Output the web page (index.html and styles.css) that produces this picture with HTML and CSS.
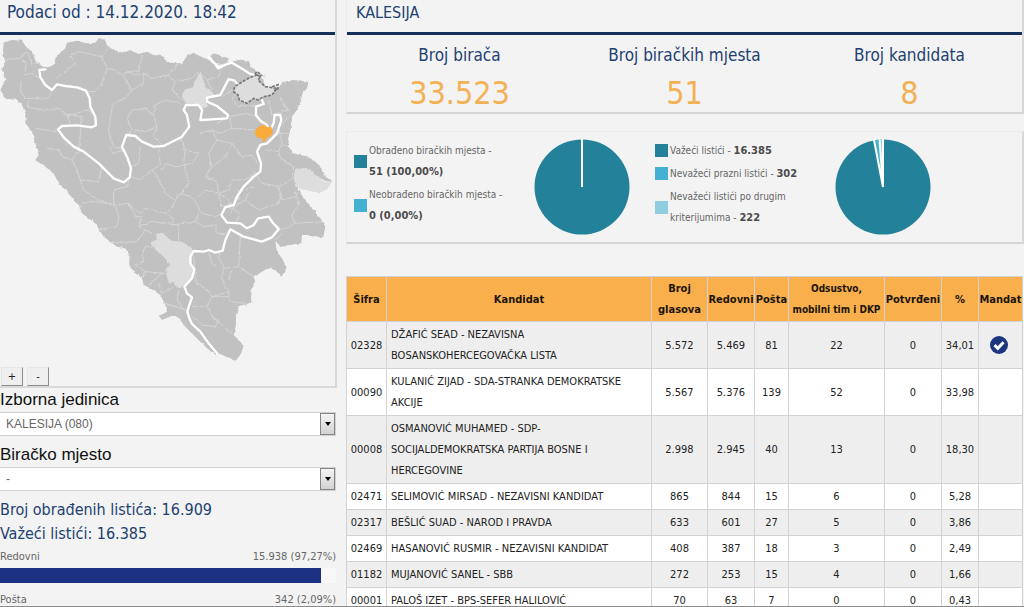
FILE: index.html
```html
<!DOCTYPE html>
<html lang="bs">
<head>
<meta charset="utf-8">
<meta name="viewport" content="width=device-width, initial-scale=1">
<title>Kalesija – rezultati</title>
<link rel="stylesheet" href="styles.css">
</head>
<body>
<div class="page">
  <aside class="side">
    <section class="map-card">
      <h1 class="bar-title">Podaci od : 14.12.2020. 18:42</h1>
      <svg class="map" viewBox="4 105 1005 997" role="img" aria-label="Mapa">
        <defs>
          <filter id="rough" x="-5%" y="-5%" width="110%" height="110%" color-interpolation-filters="sRGB">
            <feTurbulence type="fractalNoise" baseFrequency="0.08" numOctaves="2" seed="4"/>
            <feDisplacementMap in="SourceGraphic" scale="9" xChannelSelector="R" yChannelSelector="G"/>
          </filter>
        </defs>
        <g filter="url(#rough)">
          <path class="land" d="M15 128L40 120 70 122 82 140 100 155 112 185 140 205 165 195 172 170 200 145 205 128 235 122 262 130 290 128 300 114 318 118 325 135 345 150 375 158 395 150 420 162 445 155 465 165 490 168 500 180 515 188 550 190 565 168 585 158 600 168 625 176 648 195 660 205 690 185 705 187 715 178 750 183 758 200 785 225 800 258 838 265 850 250 885 240 930 245 925 265 912 280 905 305 895 330 880 350 878 380 870 410 868 440 890 462 920 468 935 485 930 510 890 515 895 560 905 580 925 605 945 630 965 655 980 680 974 710 960 712 940 705 910 705 908 730 870 735 850 740 830 725 835 755 850 775 865 805 848 830 830 810 815 800 790 815 765 832 770 845 758 870 758 905 745 913 722 918 712 945 712 975 705 1005 720 1020 735 1035 728 1060 712 1082 690 1073 655 1058 650 1065 620 1040 590 1010 560 980 545 960 525 945 490 960 480 948 505 935 500 915 485 885 455 865 435 855 430 835 410 820 392 795 392 765 380 745 355 740 315 710 290 670 250 640 240 615 200 570 175 540 165 520 140 500 110 480 120 465 110 430 100 395 80 370 82 345 70 315 50 295 25 300 5 270 20 240 10 210 20 185 12 160Z"/>
          <path class="land" d="M635 165L650 161 665 167 690 175 685 190 660 194 645 185Z"/>
          <path class="pale" d="M605 213L612 235 620 262 640 275 650 290 620 300 628 318 612 325 590 312 560 310 550 290 555 270 582 262 590 240ZM890 508L925 503 965 525 975 545 1000 545 985 568 960 580 935 572 890 560 885 530ZM470 702L490 698 520 722 550 725 580 745 582 765 575 785 588 810 575 840 560 852 545 865 530 860 525 845 510 850 500 810 515 795 495 770 465 745 455 728 475 718Z"/>
          <path class="land" d="M925 468L950 485 968 502 972 522 1000 545 980 543 950 525 925 500Z"/>
          <path class="edge" d="M20 180L60 175 82 190 78 225 100 220 135 240M60 175L85 155 100 190 125 190M68 245L65 270 80 295 150 295 165 260M90 300L85 320 105 325 150 330 180 325 205 345 215 370M110 385L175 395M205 350L265 330 285 340M172 235L200 215 230 190 215 165 240 155 310 170 330 140M310 170L325 205 350 210 375 230 400 270 380 295 345 310 335 350 330 395 345 440 375 450M325 205L310 250 290 275 260 275M375 230L385 215 420 215 430 165M385 215L410 225 435 220 435 250 400 270M435 220L460 235 510 225 540 190M510 225L530 245 520 270 550 300M530 245L580 235 600 215 625 240 660 230 670 205M625 240L640 270M400 330L385 355 400 390 385 405M400 330L440 325 465 345 470 315 500 300 545 310M465 345L475 380 465 410 490 435M475 380L440 395 410 390M250 350L245 405 240 445M205 345L250 350M140 445L180 450 190 470 220 480 240 450M220 480L235 510 245 540 300 545 310 500M245 540L255 570 300 600 345 615 345 570 385 560 395 530 425 540 460 510 470 520 500 580 530 600M330 440L345 460 375 450M425 440L420 490 395 500M460 510L485 495 480 440M545 410L560 450 600 460 580 490 530 500 500 490 490 510M560 450L555 490 570 550 540 590M600 400L640 390 655 420 700 430 730 470 760 465 775 490M655 420L630 460 640 500 680 470 700 430M640 500L620 530 655 545 660 580 690 570 700 540 740 540 770 515M655 370L690 350 700 385 665 400 640 390M690 350L740 340 775 350M700 385L770 390M670 290L700 270M710 280L700 300 720 320 770 315M810 300L820 345 870 330 850 305M845 290L855 315 870 330M870 350L840 385 850 430 870 440M850 430L840 455 800 450M840 455L850 480 885 500 880 540 840 560 790 550 770 520M840 560L850 600 890 590 900 575M250 610L290 605 350 615 360 655 355 680 300 690M345 615L390 610 410 650 430 650 420 680 440 690 415 725 340 728M385 610L425 640 440 625 500 640 520 625 540 580 580 590 610 640 650 650 670 640M500 640L525 655 520 675 590 665 600 640M420 680L460 665 540 675 540 725M590 665L615 680 650 675 655 700 680 700M440 690L460 700M430 760L440 740 470 740M410 795L440 815 500 820M430 760L435 785 410 795M440 815L430 840M490 820L450 855M480 850L490 880 525 860M540 870L535 900 555 930M500 910L565 930M585 765L590 845 625 870 640 890 690 875 670 840 675 800 660 770 665 755M630 755L640 790 655 800M675 805L720 800 725 710M720 800L765 830M690 840L700 810M690 875L695 905 745 910M640 890L625 920 580 920M640 890L690 890M625 910L640 950 700 1000M580 950L610 975 650 980 660 960 640 950M890 575L900 610 880 645 890 670 970 665M890 670L850 690 830 670M725 640L700 625 740 600 750 580M740 600L780 630 840 610 850 580M725 640L710 670M830 720L850 700M700 590L720 600 720 570M600 590L620 570 660 580 670 620 700 610M660 580L690 600 700 640M765 560L740 570M840 400L870 400M780 230L800 225"/>
        </g>
        <path class="entity" d="M630 172L648 190 658 205 685 192 700 188 728 205 755 222 775 225M140 208L122 210 125 232 140 255 160 270 175 253 200 258 235 262 262 272 273 295 275 320 290 350 292 375 280 382 235 376 190 378 178 388 195 412 225 440 255 455 300 490 345 535 375 547 393 532 397 505 385 470 370 440 383 405 410 408 430 425 465 440 495 438 550 410 572 380 565 345 555 330 562 315 600 315 610 330 605 360 640 358 685 355 688 345 655 318 625 305 625 293 665 285 690 237 708 242 720 258M790 300L795 312 772 320 772 345 785 362 805 375 812 395 825 370 828 345 845 345 848 360 835 400 805 430 785 435 775 455 787 490 785 515 765 530 735 560 715 590 705 615 680 622 668 645 685 668 725 670 745 685 765 675 778 655 810 650 820 665 840 688 820 712 790 725 735 710 695 688 680 720 672 752 650 758 630 750 615 755 585 753 575 770 575 790 587 808 580 835 557 860 565 880 580 892 572 915 566 935 572 955 580 972 605 995 630 1030 655 1060"/>
        <path class="district" d="M775 225L785 230 778 240 800 260 835 265 820 285 795 290 778 300 765 295 745 310 722 300 718 285 705 275 708 260 740 240 760 230ZM768 223l8-8 12 10-6 6M820 260l18-6 0 12-12 6"/>
        <path class="selected" d="M783 378L798 374 805 381 818 380 823 400 812 410 805 413 800 422 795 428 790 415 775 412 768 400 772 388Z"/>
      </svg>
      <div class="zoom"><button type="button">+</button><button type="button">-</button></div>
    </section>

    <form class="filters">
      <label for="unit">Izborna jedinica</label>
      <div class="drop"><select id="unit"><option>KALESIJA (080)</option></select><span class="drop-btn"></span></div>
      <label for="station">Biračko mjesto</label>
      <div class="drop"><select id="station"><option>-</option></select><span class="drop-btn"></span></div>
    </form>

    <section class="totals">
      <p class="total">Broj obrađenih listića: 16.909</p>
      <p class="total">Važeći listići: 16.385</p>
      <div class="meter-head"><span>Redovni</span><span>15.938 (97,27%)</span></div>
      <div class="meter"><div class="meter-fill" style="width:95.6%"></div></div>
      <div class="meter-head"><span>Pošta</span><span>342 (2,09%)</span></div>
      <div class="meter"><div class="meter-fill" style="width:2.09%"></div></div>
    </section>
  </aside>

  <main class="main">
    <section class="card">
      <h2 class="bar-title small">KALESIJA</h2>
      <div class="stats">
        <div><h3>Broj birača</h3><p>33.523</p></div>
        <div><h3>Broj biračkih mjesta</h3><p>51</p></div>
        <div><h3>Broj kandidata</h3><p>8</p></div>
      </div>
    </section>

    <section class="card charts">
      <ul class="legend">
        <li><i class="key c1"></i><span>Obrađeno biračkih mjesta -<br><b>51 (100,00%)</b></span></li>
        <li><i class="key c2"></i><span>Neobrađeno biračkih mjesta -<br><b>0 (0,00%)</b></span></li>
      </ul>
      <svg class="pie" viewBox="0 0 96 96" aria-hidden="true">
        <circle cx="48" cy="48" r="47.500" class="p1"/>
        <path class="cut" d="M48 0V48"/>
      </svg>
      <ul class="legend">
        <li><i class="key c1"></i><span>Važeći listići - <b>16.385</b></span></li>
        <li><i class="key c2"></i><span>Nevažeći prazni listići - <b>302</b></span></li>
        <li><i class="key c3"></i><span>Nevažeći listići po drugim<br>kriterijumima - <b>222</b></span></li>
      </ul>
      <svg class="pie" viewBox="0 0 96 96" aria-hidden="true">
        <circle cx="48" cy="48" r="47.500" class="p1"/>
        <path class="p2" d="M48 48L39 1.300 44.500.600Z"/>
        <path class="p3" d="M48 48L44.500.600 48 .500Z"/>
        <path class="cut" d="M48 48L38.800 0M48 48L44.500 0M48 48V0"/>
      </svg>
    </section>

    <table class="results">
      <colgroup><col class="w-code"><col class="w-name"><col class="w-votes"><col class="w-reg"><col class="w-post"><col class="w-abs"><col class="w-conf"><col class="w-pct"><col class="w-seat"></colgroup>
      <thead>
        <tr><th>Šifra</th><th>Kandidat</th><th>Broj glasova</th><th>Redovni</th><th>Pošta</th><th class="long">Odsustvo,<br>mobilni tim i DKP</th><th>Potvrđeni</th><th>%</th><th>Mandat</th></tr>
      </thead>
      <tbody>
        <tr><td>02328</td><td>DŽAFIĆ SEAD - NEZAVISNA BOSANSKOHERCEGOVAČKA LISTA</td><td>5.572</td><td>5.469</td><td>81</td><td>22</td><td>0</td><td>34,01</td><td><svg class="tick" viewBox="0 0 18 18" role="img" aria-label="Mandat"><circle cx="9" cy="9" r="9"/><path d="M4.500 9.200L7.800 12.300 13.600 6.300"/></svg></td></tr>
        <tr><td>00090</td><td>KULANIĆ ZIJAD - SDA-STRANKA DEMOKRATSKE AKCIJE</td><td>5.567</td><td>5.376</td><td>139</td><td>52</td><td>0</td><td>33,98</td><td></td></tr>
        <tr><td>00008</td><td>OSMANOVIĆ MUHAMED - SDP-SOCIJALDEMOKRATSKA PARTIJA BOSNE I HERCEGOVINE</td><td>2.998</td><td>2.945</td><td>40</td><td>13</td><td>0</td><td>18,30</td><td></td></tr>
        <tr><td>02471</td><td>SELIMOVIĆ MIRSAD - NEZAVISNI KANDIDAT</td><td>865</td><td>844</td><td>15</td><td>6</td><td>0</td><td>5,28</td><td></td></tr>
        <tr><td>02317</td><td>BEŠLIĆ SUAD - NAROD I PRAVDA</td><td>633</td><td>601</td><td>27</td><td>5</td><td>0</td><td>3,86</td><td></td></tr>
        <tr><td>02469</td><td>HASANOVIĆ RUSMIR - NEZAVISNI KANDIDAT</td><td>408</td><td>387</td><td>18</td><td>3</td><td>0</td><td>2,49</td><td></td></tr>
        <tr><td>01182</td><td>MUJANOVIĆ SANEL - SBB</td><td>272</td><td>253</td><td>15</td><td>4</td><td>0</td><td>1,66</td><td></td></tr>
        <tr><td>00001</td><td>PALOŠ IZET - BPS-SEFER HALILOVIĆ</td><td>70</td><td>63</td><td>7</td><td>0</td><td>0</td><td>0,43</td><td></td></tr>
      </tbody>
    </table>
  </main>
</div>
</body>
</html>
```

FILE: styles.css
```css
* { box-sizing: border-box; }
body, h1, h2, h3, p, ul { margin: 0; padding: 0; font-weight: normal; }
body {
  background: #f3f3f3;
  color: #222;
  font-family: "DejaVu Sans Condensed", Tahoma, "DejaVu Sans", sans-serif;
  font-size: 11px;
}
.page {
  display: grid;
  grid-template-columns: 337fr 678fr;
  gap: 9px;
  height: 100vh;
  overflow: hidden;
  border-bottom: 1px solid #8c8c8c;
}
.side, .main { min-width: 0; }

.bar-title {
  height: 35px;
  padding: 0 7px;
  border-bottom: 3px solid #12305a;
  color: #1d4171;
  font-size: 17px;
  line-height: 25px;
}
.bar-title.small { padding: 0 9px; font-size: 16px; }

.map-card { border-right: 2px solid #d9d9d9; border-bottom: 2px solid #d9d9d9; }
.map { display: block; width: 100%; }
.land { fill: #c1c1c1; }
.pale { fill: #dddddd; }
.edge { fill: none; stroke: #d6d6d6; stroke-width: 3; }
.entity { fill: none; stroke: #fff; stroke-width: 7; stroke-linejoin: round; stroke-linecap: round; }
.district { fill: #dddddd; stroke: #777; stroke-width: 5; stroke-dasharray: 9 4; }
.selected { fill: #f9ab3b; }
.zoom { display: flex; gap: 4px; padding-left: 1px; }
.zoom button {
  width: 22px;
  height: 19px;
  padding: 0;
  border: 1px solid;
  border-color: #e6e6e6 #8d8d8d #8d8d8d #e6e6e6;
  background: #efefef;
  color: #222;
  font: 11px "DejaVu Sans Condensed", sans-serif;
}

.filters { display: flex; flex-direction: column; padding-right: 1px; }
.filters label { color: #111; font: 17px/24px "Liberation Sans", Arial, sans-serif; }
.drop {
  display: flex;
  height: 24px;
  margin-bottom: 7px;
  border: 1px solid #d0d0d0;
  border-left: 0;
  background: #fff;
}
.drop select {
  flex: 1;
  appearance: none;
  border: 0;
  padding: 0 6px;
  background: transparent;
  color: #666;
  font: 12px "Liberation Sans", Arial, sans-serif;
}
.drop-btn {
  display: grid;
  place-items: center;
  width: 15px;
  border: 1px solid #858585;
  background: linear-gradient(#f4f4f4, #d2d2d2);
}
.drop-btn::after {
  content: "";
  border: 3px solid transparent;
  border-top: 4px solid #000;
  border-bottom: 0;
}

.totals { padding-right: 1px; color: #666; }
.total { color: #1d4171; font-size: 16px; line-height: 24px; }
.meter-head { display: flex; justify-content: space-between; line-height: 22px; }
.meter { height: 15px; margin-bottom: 6px; background: #f8f8f8; }
.meter-fill { height: 100%; background: #1b2f83; }

.card { border: 1px solid #ececec; border-top: 0; border-right: 2px solid #d9d9d9; border-bottom: 2px solid #d4d4d4; }
.stats { display: grid; grid-template-columns: repeat(3, 1fr); height: 77px; padding-top: 8px; text-align: center; }
.stats h3 { color: #1d4171; font-size: 17px; line-height: 24px; }
.stats p { color: #f3b155; font-size: 32px; line-height: 52px; }

.charts {
  display: grid;
  grid-template-columns: 187fr 114fr 187fr 187fr;
  height: 113px;
  margin: 17px 0 32px;
  border-top: 1px solid #ececec;
  color: #666;
}
.legend { padding: 8px 0 0 7px; list-style: none; font-size: 10px; line-height: 21px; }
.legend li { display: flex; align-items: center; gap: 2px; margin-bottom: 2px; }
.legend b { color: #4a4a4a; font-size: 11px; }
.key { flex: none; width: 13px; height: 13px; }
.c1 { background: #24819a; }
.c2 { background: #45b1d2; }
.c3 { background: #8fcde0; }
.pie { width: 96px; height: 96px; margin-top: 7px; }
.p1 { fill: #24819a; }
.p2 { fill: #45b1d2; }
.p3 { fill: #8fcde0; }
.cut { fill: none; stroke: #fff; stroke-width: 2; }

.results { width: calc(100% - 1px); table-layout: fixed; border-collapse: collapse; color: #222; line-height: 21px; }
.results th, .results td { padding: 2px 0; border: 1px solid #d2d2d2; text-align: center; }
.results th { padding: 1px 0; background: #f9b04c; color: #1c1408; font-size: 11px; }
.results .long { font-size: 10px; }
.results td:nth-child(2) { padding: 2px 4px; text-align: left; }
.results tbody tr { background: #fff; }
.results tbody tr:nth-child(odd) { background: #eeeeee; }
.w-code { width: 40px; }
.w-votes { width: 56px; }
.w-reg { width: 47px; }
.w-post { width: 34px; }
.w-abs { width: 96px; }
.w-conf { width: 57px; }
.w-pct { width: 37px; }
.w-seat { width: 44px; }
.tick { display: block; width: 18px; height: 18px; margin: 0 auto 0 11px; fill: #1b367f; }
.tick path { fill: none; stroke: #fff; stroke-width: 3; }
```
